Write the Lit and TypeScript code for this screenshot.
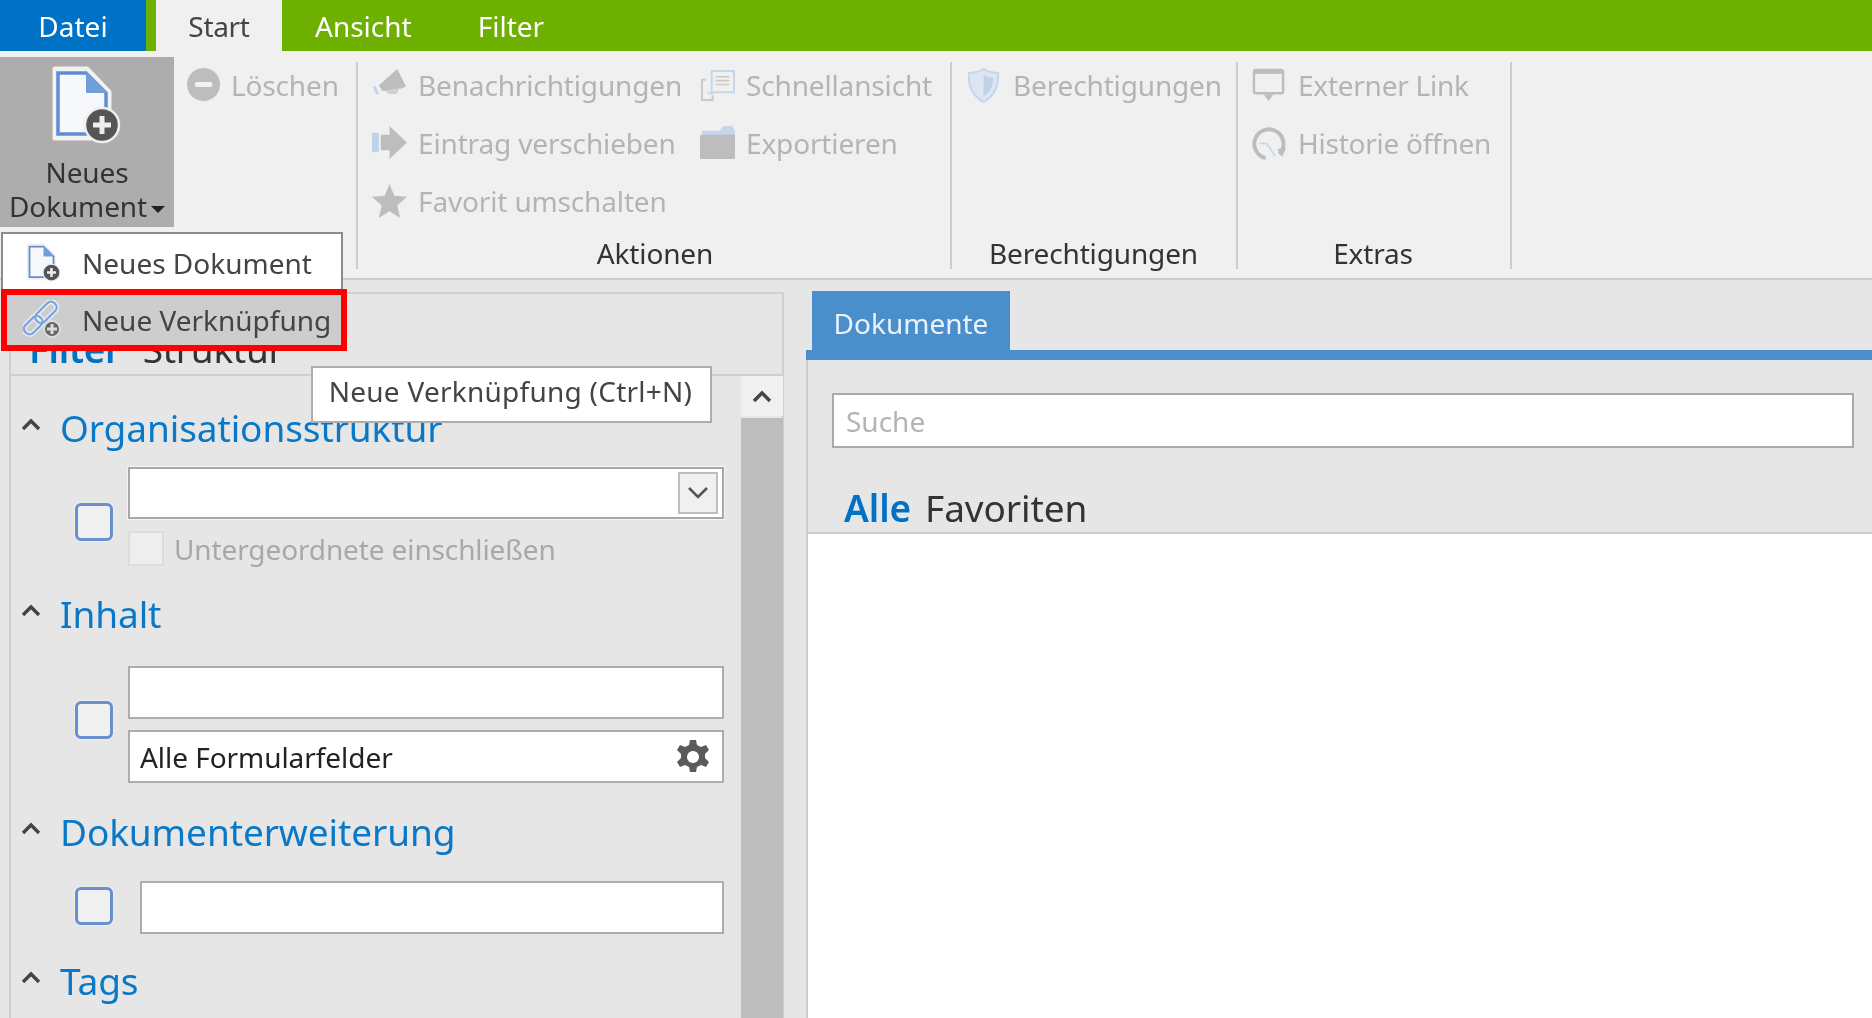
import { LitElement, html, css, svg } from "lit";
import { customElement } from "lit/decorators.js";

const chevUp = html`<svg class="chev" viewBox="0 0 20 14"><path d="M2 12 L10 4 L18 12" fill="none" stroke="#444" stroke-width="3.4"/></svg>`;

const icons: Record<string, unknown> = {
  minus: svg`<circle cx="17" cy="17" r="17" fill="#bdbdbd"/><rect x="8" y="14.5" width="18" height="5" rx="2" fill="#f2f2f2"/>`,
  mega: svg`<path d="M7 18 L26 1 L35 19 L30 21 L11 24Z" fill="#bdbdbd"/><path d="M14 23 L27 21 L25 26 H17Z" fill="#d2d2d2" stroke="#c6c6c6" stroke-width="1"/><path d="M2 19 L6 27" stroke="#c3d6ea" stroke-width="3"/>`,
  quick: svg`<path d="M12 3 h23 v22 h-23z" fill="none" stroke="#c3d6ea" stroke-width="2"/><path d="M16 9h14M16 13h14M16 17h14" stroke="#c9c9c9" stroke-width="1.6"/><path d="M6 12 H2 V33 H13 V28" fill="none" stroke="#c9c9c9" stroke-width="2"/><path d="M8 26 h6" stroke="#c3d6ea" stroke-width="2"/>`,
  arrow: svg`<rect x="0" y="7" width="7" height="20" fill="#bcd3ea"/><path d="M9 9 H18 V0 L36 17 L18 34 V25 H9Z" fill="#bdbdbd"/>`,
  folder: svg`<path d="M2 5 L20 5 L24 0 H33 L36 5 V11 H2Z" fill="#c5d6e8"/><rect x="0" y="9" width="36" height="25" rx="1" fill="#bdbdbd"/>`,
  star: svg`<path d="M18 0 L23 12 L36 13 L26 22 L29 35 L18 28 L7 35 L10 22 L0 13 L13 12Z" fill="#bdbdbd"/>`,
  shield: svg`<path d="M17 1 C22 4 27 5 32 5 C33 17 29 28 17 35 C5 28 1 17 2 5 C7 5 12 4 17 1Z" fill="#dbe6f2" stroke="#c3d6ea" stroke-width="2"/><path d="M17 7 C20 9 23 10 27 10 C27 18 24 25 17 29Z" fill="#bfd3e8"/>`,
  ext: svg`<rect x="2" y="2" width="30" height="24" rx="2" fill="none" stroke="#bdbdbd" stroke-width="2.5"/><rect x="2" y="2" width="30" height="4" fill="#bdbdbd"/><path d="M12 27 h10 l-5 7z" fill="#bdbdbd"/>`,
  hist: svg`<path d="M28 29 A15 15 0 1 0 14 33" fill="none" stroke="#bdbdbd" stroke-width="4"/><path d="M26 24 L35 22 L31 32Z" fill="#bdbdbd"/><path d="M8 18 H15 L24 31" fill="none" stroke="#c3d6ea" stroke-width="1.6"/>`,
};
const ic = (n: string) => html`<svg class="ic" viewBox="0 0 36 36">${icons[n]}</svg>`;

const item = (n: string, t: string) => html`<div class="item">${ic(n)}<span>${t}</span></div>`;

const docIcon = () => svg`
  <path d="M4 3 H36 L58 26 V72 H4Z" fill="#fff" stroke="#f2f2f2" stroke-width="5" stroke-linejoin="round"/>
  <path d="M7 7 H35 L55 27 V68 H7Z" fill="#f6f8fb" stroke="#5f8ed0" stroke-width="3.5"/>
  <path d="M35 5 L57 27 H35Z" fill="#6f9fd8"/>
  <circle cx="51" cy="59" r="17" fill="#555" stroke="#eee" stroke-width="2.5"/>
  <path d="M42 59 H60 M51 50 V68" stroke="#eee" stroke-width="5"/>`;

const gear = html`<svg class="gear" viewBox="0 0 36 36"><path fill="#5a5a5a" fill-rule="evenodd" d="M15 1 h6 l1 5 l4 2 l5-2 l3 5 l-4 4 v4 l4 4 l-3 5 l-5-2 l-4 2 l-1 5 h-6 l-1-5 l-4-2 l-5 2 l-3-5 l4-4 v-4 l-4-4 l3-5 l5 2 l4-2z M18 12 a6 6 0 1 0 .01 0z"/></svg>`;

@customElement("app-root")
export class AppRoot extends LitElement {
  static styles = css`
    :host { display: block; width: 1872px; height: 1018px; position: relative; overflow: hidden;
      background: #e6e6e6; font-family: "Noto Sans", "Open Sans", sans-serif; color: #333; filter: blur(0.45px); }
    * { box-sizing: border-box; }
    .tabs { display: flex; height: 51px; background: #6eb000; font-size: 28px; letter-spacing: 0; color: #fff; }
    .tab { display: flex; align-items: center; justify-content: center; height: 51px; }
    .datei { width: 146px; background: #0072c6; margin-right: 10px; }
    .start { width: 126px; background: #f0f0f0; color: #444; letter-spacing: -0.3px; }
    .ansicht { margin-left: 33px; margin-right: 66px; }

    .ribbon { display: flex; height: 229px; background: #f0f0f0; border-bottom: 2px solid #ccc; }
    .big { width: 174px; height: 170px; margin-top: 6px; background: #adadad; display: flex; flex-direction: column;
      align-items: center; font-size: 28px; letter-spacing: -0.15px; line-height: 34px; color: #333; text-align: center; flex: none; }
    .big svg.doc { width: 72px; height: 80px; margin-top: 9px; margin-bottom: 9px; }
    .caret { display: inline-block; width: 0; height: 0; border: 7px solid transparent; border-top-color: #222; border-bottom: 0; margin-left: 4px; vertical-align: 4px; }
    .group { height: 207px; margin-top: 11px; border-right: 2px solid #ccc; display: flex; flex-direction: column; flex: none; }
    .g1 { width: 184px; padding-left: 13px; }
    .g2 { width: 594px; padding-left: 14px; }
    .g3 { width: 286px; padding-left: 15px; }
    .g4 { width: 274px; padding-left: 14px; }
    .g1 .ic { margin-right: 9px; }
    .rows { height: 180px; margin-top: -6px; flex: none; display: grid; grid-auto-rows: 58px; align-content: start; }
    .g2 .rows { grid-template-columns: 328px auto; }
    .label { height: 33px; line-height: 35px; text-align: center; font-size: 28px; letter-spacing: -0.15px; color: #333; margin-left: -16px; }
    .g2 .label { margin-left: -12px; }
    .item { display: flex; align-items: center; font-size: 28px; letter-spacing: -0.15px; color: #b4b4b4; white-space: nowrap; height: 58px; }
    .g4 .item { letter-spacing: -0.25px; }
    .ic { width: 35px; height: 35px; margin-right: 11px; flex: none; }

    .main { display: flex; height: 738px; padding: 12px 0 0 9px; }
    .panel { width: 775px; height: 800px; border: 2px solid #cfcfcf; border-bottom: 0; display: flex; flex-direction: column; flex: none; }
    .ptabs { height: 82px; border-bottom: 2px solid #cfcfcf; display: flex; align-items: flex-end; padding-left: 18px; gap: 22px; font-size: 37px; line-height: 50px; letter-spacing: -0.3px; color: #333; flex: none; }
    .sel { color: #0072c6; font-weight: 600; }
    .pbody { display: flex; flex: 1; min-height: 0; }
    .pcontent { width: 730px; padding-left: 10px; flex: none; }
    .sbar { width: 42px; flex: none; display: flex; flex-direction: column; }
    .sup { height: 40px; background: #f0f0f0; display: flex; align-items: center; justify-content: center; margin-bottom: 2px; }
    .sup .chev { margin: 0; }
    .thumb { flex: 1; background: #bdbdbd; }

    .head { display: flex; align-items: center; height: 52px; font-size: 37px; letter-spacing: -0.1px; color: #0a78c8; }
    .chev { width: 20px; height: 14px; margin-right: 19px; margin-top: -6px; flex: none; }
    .h1 { margin-top: 25px; }
    .h2 { margin-top: 21px; }
    .h3 { margin-top: 22px; }
    .h4 { margin-top: 20px; }
    .row { display: flex; margin-top: 14px; padding-left: 54px; }
    .row.r2 { margin-top: 27px; }
    .row.r3 { margin-top: 24px; }
    .cb { width: 38px; height: 38px; border: 3px solid #6a8fcf; border-radius: 6px; background: #f0f0f0; flex: none; box-shadow: 0 0 2px #fff; }
    .fields { width: 596px; margin-left: 15px; display: flex; flex-direction: column; gap: 11px; }
    .r1 .cb { margin-top: 36px; }
    .r2 .cb { margin-top: 35px; }
    .r3 .cb { margin-top: 6px; }
    .r3 .fields { width: 584px; margin-left: 27px; }
    .field { height: 53px; background: #fff; border: 2px solid #adadad; display: flex; align-items: center; padding: 0 9px 0 10px; font-size: 28px; letter-spacing: -0.05px; color: #222; justify-content: space-between; }
    .field.combo { border-color: #a8a8a8; padding: 0 4px 0 0; justify-content: flex-end; height: 52px; outline: 1px solid #f4f4f4; }
    .drop { width: 40px; height: 42px; background: #f0f0f0; border: 2px solid #bdbdbd; display: flex; align-items: center; justify-content: center; }
    .drop svg { width: 22px; height: 14px; }
    .gear { width: 36px; height: 36px; margin-right: 2px; }
    .sub { display: flex; align-items: center; height: 35px; margin-top: 1px; font-size: 28px; letter-spacing: -0.12px; color: #a8a8a8; white-space: nowrap; }
    .subcb { width: 36px; height: 35px; background: #eee; border: 2px solid #dcdcdc; margin-right: 10px; }

    .right { flex: 1; margin-left: 22px; margin-top: -1px; display: flex; flex-direction: column; min-width: 0; }
    .dtab { width: 198px; height: 59px; margin-left: 6px; background: #4a8ecc; color: #eaf2fa; font-size: 28px; display: flex; align-items: center; justify-content: center; padding-top: 4px; flex: none; }
    .band { height: 10px; background: #4a8ecc; flex: none; }
    .rbody { flex: 1; border-left: 2px solid #ccc; display: flex; flex-direction: column; min-height: 0; }
    .search { height: 55px; margin: 33px 18px 0 24px; background: #fff; border: 2px solid #aaa; display: flex; align-items: center; padding-left: 12px; font-size: 28px; color: #b4b4b4; flex: none; }
    .rtabs { height: 86px; border-bottom: 2px solid #ccc; padding-left: 36px; display: flex; align-items: flex-end; gap: 14px; font-size: 37px; letter-spacing: -0.1px; line-height: 48px; color: #333; flex: none; }
    .white { flex: 1; background: #fff; }

    .menu { position: absolute; left: 1px; top: 232px; width: 342px; background: #fff; border: 2px solid #8c8c8c; border-bottom: 0; }
    .mi { display: flex; align-items: center; font-size: 28px; color: #444; white-space: nowrap; }
    .mi svg { flex: none; }
    .mi1 { height: 55px; padding-left: 22px; padding-top: 2px; }
    .mi1 svg { width: 38px; height: 40px; margin-right: 19px; }
    .mi2 { height: 62px; margin: 0 -6px 0 -2px; border: 6px solid #f00; background: #cdcdcd; padding-left: 16px; }
    .mi2 svg { width: 40px; height: 40px; margin-right: 19px; }
    .tip { position: absolute; left: 311px; top: 366px; width: 401px; height: 57px; background: #fff; border: 2px solid #adadad; display: flex; align-items: center; justify-content: center; font-size: 28px; letter-spacing: 0.25px; color: #444; white-space: nowrap; padding-bottom: 8px; padding-right: 2px; }
  `;

  render() {
    return html`
      <div class="tabs">
        <div class="tab datei">Datei</div>
        <div class="tab start">Start</div>
        <div class="tab ansicht">Ansicht</div>
        <div class="tab filter">Filter</div>
      </div>
      <div class="ribbon">
        <div class="big">
          <svg class="doc" viewBox="0 0 72 80">${docIcon()}</svg>
          <div>Neues<br />Dokument<span class="caret"></span></div>
        </div>
        <div class="group g1"><div class="rows">${item("minus", "Löschen")}</div></div>
        <div class="group g2">
          <div class="rows">
            ${item("mega", "Benachrichtigungen")}${item("quick", "Schnellansicht")}
            ${item("arrow", "Eintrag verschieben")}${item("folder", "Exportieren")}
            ${item("star", "Favorit umschalten")}
          </div>
          <div class="label">Aktionen</div>
        </div>
        <div class="group g3">
          <div class="rows">${item("shield", "Berechtigungen")}</div>
          <div class="label">Berechtigungen</div>
        </div>
        <div class="group g4">
          <div class="rows">${item("ext", "Externer Link")}${item("hist", "Historie öffnen")}</div>
          <div class="label">Extras</div>
        </div>
      </div>
      <div class="main">
        <div class="panel">
          <div class="ptabs"><span class="sel">Filter</span><span>Struktur</span></div>
          <div class="pbody">
            <div class="pcontent">
              <div class="head h1">${chevUp}Organisationsstruktur</div>
              <div class="row r1">
                <div class="cb"></div>
                <div class="fields">
                  <div class="field combo">
                    <div class="drop"><svg viewBox="0 0 22 14"><path d="M2 2 L11 11 L20 2" fill="none" stroke="#555" stroke-width="2.6"/></svg></div>
                  </div>
                  <div class="sub"><div class="subcb"></div>Untergeordnete einschließen</div>
                </div>
              </div>
              <div class="head h2">${chevUp}Inhalt</div>
              <div class="row r2">
                <div class="cb"></div>
                <div class="fields">
                  <div class="field"></div>
                  <div class="field">Alle Formularfelder${gear}</div>
                </div>
              </div>
              <div class="head h3">${chevUp}Dokumenterweiterung</div>
              <div class="row r3">
                <div class="cb"></div>
                <div class="fields"><div class="field"></div></div>
              </div>
              <div class="head h4">${chevUp}Tags</div>
            </div>
            <div class="sbar">
              <div class="sup">${chevUp}</div>
              <div class="thumb"></div>
            </div>
          </div>
        </div>
        <div class="right">
          <div class="dtab">Dokumente</div>
          <div class="band"></div>
          <div class="rbody">
            <div class="search">Suche</div>
            <div class="rtabs"><span class="sel">Alle</span><span>Favoriten</span></div>
            <div class="white"></div>
          </div>
        </div>
      </div>
      <div class="menu">
        <div class="mi mi1"><svg viewBox="0 0 72 80">${docIcon()}</svg>Neues Dokument</div>
        <div class="mi mi2">
          <svg viewBox="0 0 40 40">
            <g fill="none" transform="rotate(-45 18 18)">
              <rect x="-3" y="12" width="21" height="11" rx="5" stroke="#eef2f8" stroke-width="5"/>
              <rect x="13" y="12" width="25" height="11" rx="5" stroke="#eef2f8" stroke-width="5"/>
              <rect x="-3" y="12" width="21" height="11" rx="5" stroke="#7fa5da" stroke-width="2.4"/>
              <rect x="13" y="12" width="25" height="11" rx="5" stroke="#7fa5da" stroke-width="2.4"/>
            </g>
            <circle cx="29" cy="29" r="8" fill="#666" stroke="#ddd" stroke-width="2"/>
            <path d="M24 29 H34 M29 24 V34" stroke="#ddd" stroke-width="3"/>
          </svg>
          Neue Verknüpfung
        </div>
      </div>
      <div class="tip">Neue Verknüpfung (Ctrl+N)</div>
    `;
  }
}
